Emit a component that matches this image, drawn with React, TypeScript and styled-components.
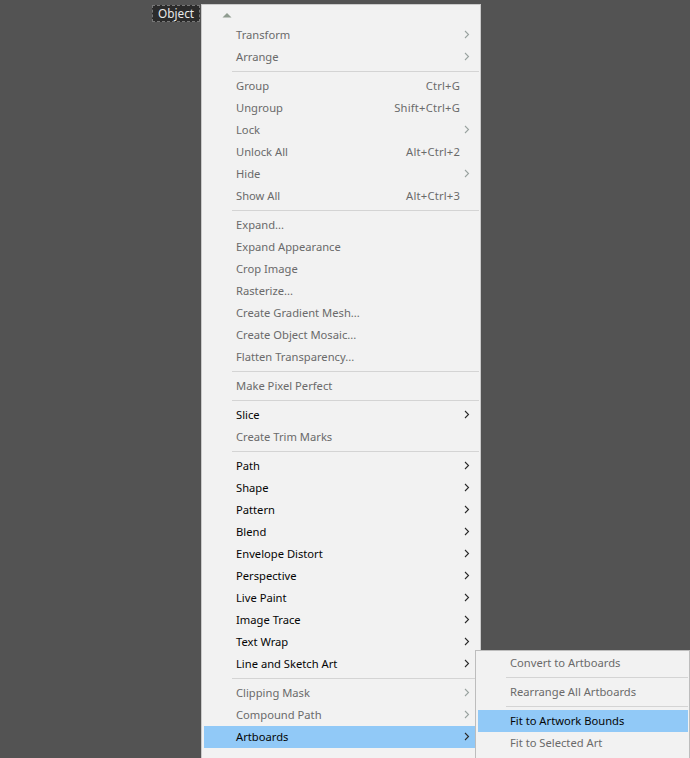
import React from "react";
import styled, { createGlobalStyle } from "styled-components";

const Global = createGlobalStyle`
  html, body { margin: 0; padding: 0; background: #535353; overflow: hidden; }
  body { width: 690px; height: 758px; font-family: "Noto Sans", "Segoe UI", sans-serif; }
  #root { width: 690px; height: 758px; }
`;

const Page = styled.div`
  position: relative;
  width: 690px;
  height: 758px;
  background: #535353;
  overflow: hidden;
`;

const MenuBar = styled.div`
  display: flex;
  padding: 5px 0 0 152px;
`;

const MenuTitle = styled.div`
  height: 17px;
  padding: 0 5px 1px;
  box-sizing: border-box;
  display: flex;
  align-items: center;
  background: #2b2b2b;
  border: 1px dashed #777;
  color: #e8e8e8;
  font-size: 11.8px;
  line-height: 15px;
`;

const Dropdown = styled.div`
  position: absolute;
  left: 201px;
  top: 4px;
  width: 278px;
  height: 780px;
  background: #f2f2f2;
  border: 1px solid #cacaca;
  display: flex;
  flex-direction: column;
`;

const Submenu = styled.div`
  position: absolute;
  left: 475px;
  top: 650px;
  width: 213px;
  height: 120px;
  background: #f2f2f2;
  border: 1px solid #bdbdbd;
  padding-top: 1px;
  display: flex;
  flex-direction: column;
`;

const ScrollArrow = styled.div<{ $h: number }>`
  height: ${(p) => p.$h}px;
  display: flex;
  align-items: center;
  padding-left: 20px;
`;

const Row = styled.div<{ $disabled?: boolean; $active?: boolean; $mr: number }>`
  height: 22px;
  box-sizing: border-box;
  margin: 0 ${(p) => p.$mr}px 0 2px;
  padding: 0 0 1px 32px;
  display: flex;
  align-items: center;
  font-size: 11.2px;
  line-height: 16px;
  color: ${(p) => (p.$disabled ? "#6a6a6a" : "#050505")};
  background: ${(p) => (p.$active ? "#91c9f7" : "transparent")};
  white-space: nowrap;
`;

const Label = styled.span`
  flex: 1;
`;

const Shortcut = styled.span`
  padding-right: 15px;
  letter-spacing: 0.2px;
`;

const ChevronBox = styled.span`
  width: 13px;
  display: flex;
  justify-content: flex-start;
  padding-left: 2px;
  box-sizing: border-box;
`;

const Sep = styled.div<{ $ml: number; $mr: number }>`
  height: 1px;
  margin: 3px ${(p) => p.$mr}px 3px ${(p) => p.$ml}px;
  background: #d4d4d4;
`;

const Chevron = ({ dim }: { dim?: boolean }) => (
  <svg width="6" height="9" viewBox="0 0 6 9">
    <path
      d="M1 1 L4.5 4.5 L1 8"
      fill="none"
      stroke={dim ? "#9aa3a0" : "#2a2a2a"}
      strokeWidth="1.1"
    />
  </svg>
);

type Item =
  | { sep: true }
  | { label: string; disabled?: boolean; sub?: boolean; shortcut?: string; active?: boolean };

const items: Item[] = [
  { label: "Transform", disabled: true, sub: true },
  { label: "Arrange", disabled: true, sub: true },
  { sep: true },
  { label: "Group", disabled: true, shortcut: "Ctrl+G" },
  { label: "Ungroup", disabled: true, shortcut: "Shift+Ctrl+G" },
  { label: "Lock", disabled: true, sub: true },
  { label: "Unlock All", disabled: true, shortcut: "Alt+Ctrl+2" },
  { label: "Hide", disabled: true, sub: true },
  { label: "Show All", disabled: true, shortcut: "Alt+Ctrl+3" },
  { sep: true },
  { label: "Expand...", disabled: true },
  { label: "Expand Appearance", disabled: true },
  { label: "Crop Image", disabled: true },
  { label: "Rasterize...", disabled: true },
  { label: "Create Gradient Mesh...", disabled: true },
  { label: "Create Object Mosaic...", disabled: true },
  { label: "Flatten Transparency...", disabled: true },
  { sep: true },
  { label: "Make Pixel Perfect", disabled: true },
  { sep: true },
  { label: "Slice", sub: true },
  { label: "Create Trim Marks", disabled: true },
  { sep: true },
  { label: "Path", sub: true },
  { label: "Shape", sub: true },
  { label: "Pattern", sub: true },
  { label: "Blend", sub: true },
  { label: "Envelope Distort", sub: true },
  { label: "Perspective", sub: true },
  { label: "Live Paint", sub: true },
  { label: "Image Trace", sub: true },
  { label: "Text Wrap", sub: true },
  { label: "Line and Sketch Art", sub: true },
  { sep: true },
  { label: "Clipping Mask", disabled: true, sub: true },
  { label: "Compound Path", disabled: true, sub: true },
  { label: "Artboards", sub: true, active: true },
];

const subItems: Item[] = [
  { label: "Convert to Artboards", disabled: true },
  { sep: true },
  { label: "Rearrange All Artboards", disabled: true },
  { sep: true },
  { label: "Fit to Artwork Bounds", active: true },
  { label: "Fit to Selected Art", disabled: true },
];

const renderItems = (list: Item[], mr: number, sepL: number, sepR: number) =>
  list.map((it, i) => {
    if ("sep" in it) return <Sep key={i} $ml={sepL} $mr={sepR} />;
    return (
      <Row key={i} $disabled={it.disabled} $active={it.active} $mr={mr}>
        <Label>{it.label}</Label>
        {it.shortcut && <Shortcut>{it.shortcut}</Shortcut>}
        {it.sub && (
          <ChevronBox>
            <Chevron dim={it.disabled} />
          </ChevronBox>
        )}
      </Row>
    );
  });

export default function App() {
  return (
    <Page>
      <Global />
      <MenuBar>
        <MenuTitle>Object</MenuTitle>
      </MenuBar>
      <Dropdown>
        <ScrollArrow $h={19}>
          <svg width="10" height="6" viewBox="0 0 10 6">
            <path d="M0.5 5.5 L5 1 L9.5 5.5 Z" fill="#8f9c90" />
          </svg>
        </ScrollArrow>
        {renderItems(items, 5, 30, 1)}
        <ScrollArrow $h={18}>
          <svg width="10" height="8" viewBox="0 0 10 8" style={{ marginTop: 12 }}>
            <path d="M0 0 H10 V1.5 H0 Z M1 2 H9 L5 7 Z" fill="#111" />
          </svg>
        </ScrollArrow>
      </Dropdown>
      <Submenu>{renderItems(subItems, 1, 30, 1)}</Submenu>
    </Page>
  );
}
